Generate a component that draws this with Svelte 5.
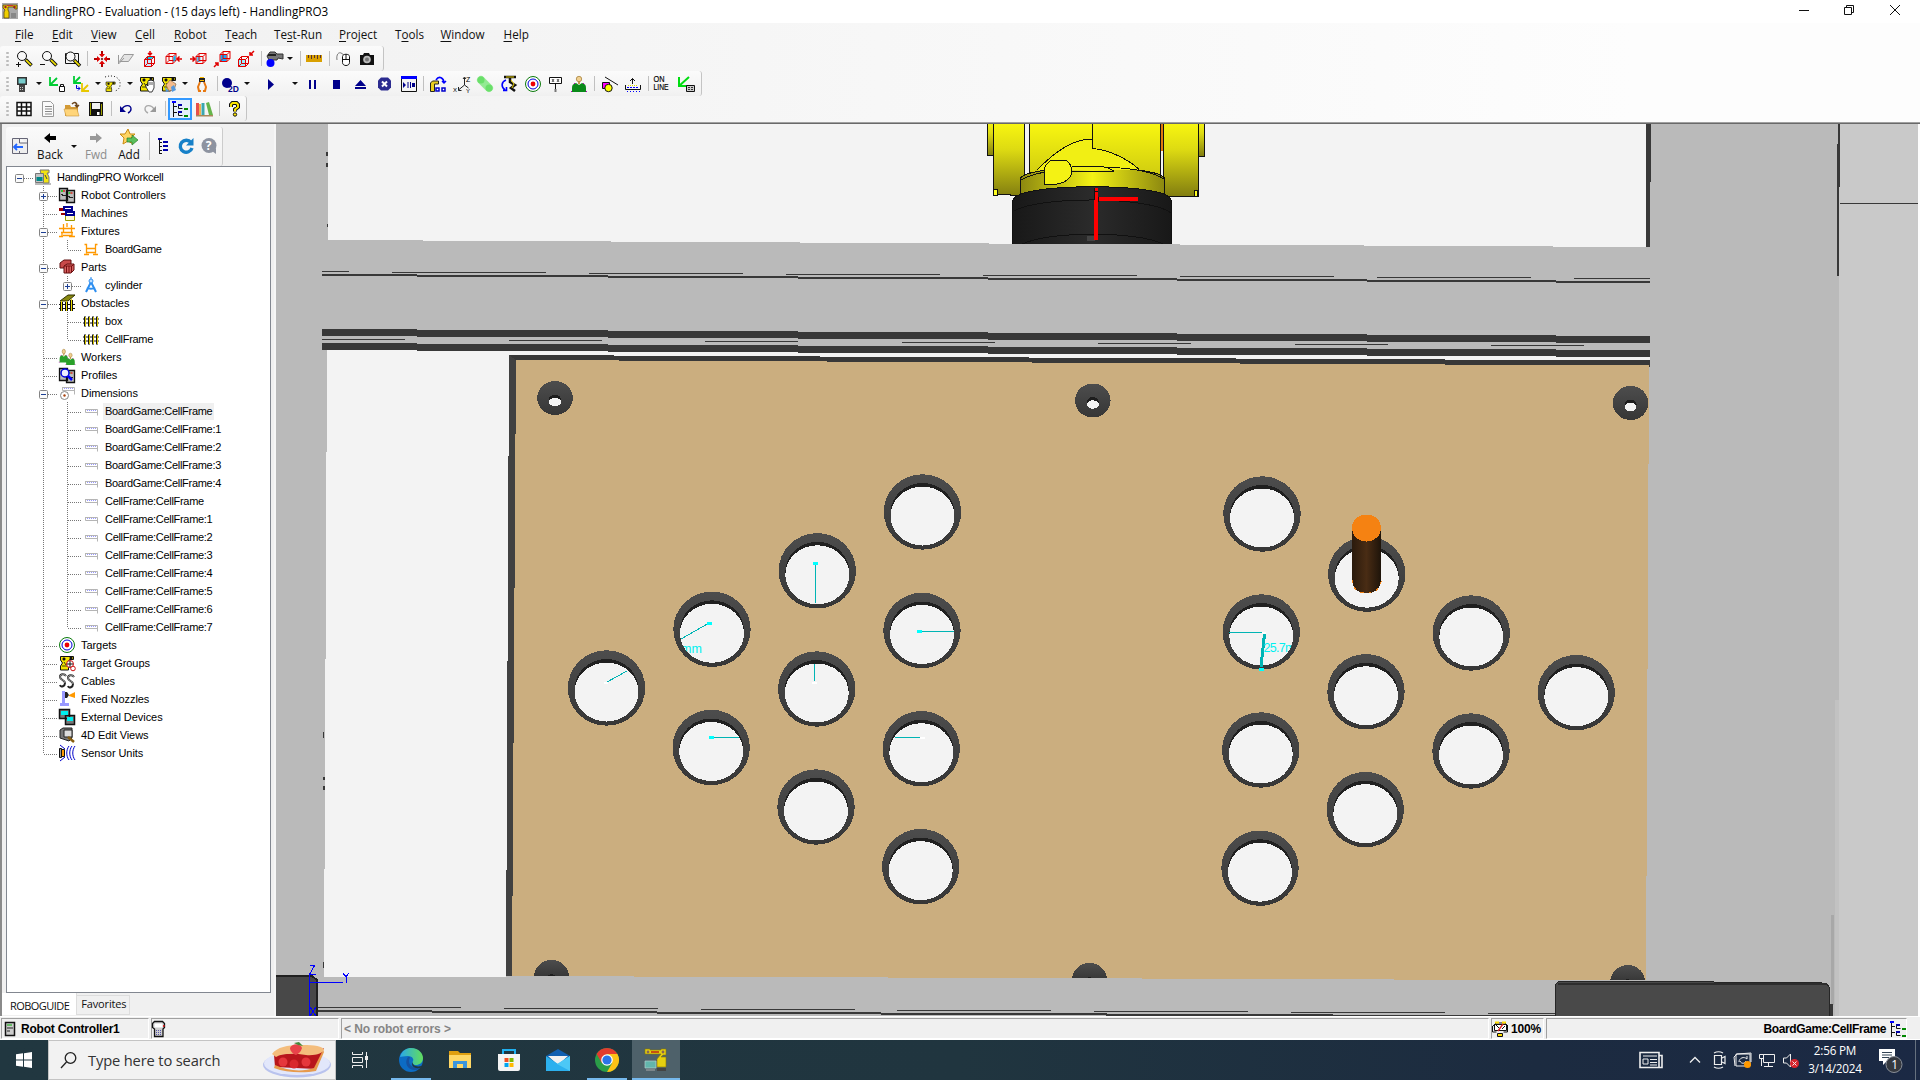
<script>
  const menus = [
    ['F', 'ile', '', 37], ['E', 'dit', '', 39], ['V', 'iew', '', 44], ['C', 'ell', '', 39], ['R', 'obot', '', 51],
    ['T', 'each', '', 49], ['s', 't-Run', 'Te', 65], ['P', 'roject', '', 56], ['o', 'ols', 'T', 45.5], ['W', 'indow', '', 63], ['H', 'elp', '', 40]
  ];

  // Toolbar entries: icon id and the width of its slot
  const bars = [
    [['zin', 24], ['zout', 24], ['zrect', 24], ['|', 6], ['fit', 24], ['plane', 24], ['cubeT', 24], ['cubeR', 24], ['cubeL', 24], ['cubeF', 24], ['cubeB', 24], ['|', 6], ['cam', 22], ['v', 8], ['|', 12], ['ruler', 16], ['|', 15], ['mouse', 15], ['photo', 31]],
    [['pendant', 20], ['v', 13], ['lock', 23], ['axes', 25], ['v', 10], ['arc', 20], ['v', 14], ['jog', 20], ['jog2', 24], ['v', 8], ['grip', 26], ['|', 4], ['twod', 22], ['v', 11], ['play', 37], ['v', 12], ['pause', 24], ['stop', 24], ['eject', 24], ['abort', 24], ['panel', 23], ['|', 6], ['rob', 24], ['xyz', 24], ['pill', 22], ['arm', 26], ['target', 22], ['sign', 24], ['person', 22], ['|', 8], ['shapes', 22], ['tray', 26], ['|', 5], ['online', 20], ['frame', 30]],
    [['grid', 24], ['doc', 24], ['open', 24], ['save', 24], ['|', 6], ['undo', 24], ['redo', 24], ['|', 6], ['tree', 24], ['books', 24], ['|', 6], ['help', 24]]
  ];

  const cube = '<path d="M2.500 6.500h7v7h-7zM5.500 3.500h7v7h-7zM2.500 6.500l3-3M9.500 6.500l3-3M2.500 13.500l3-3M9.500 13.500l3-3" fill="none" stroke="#e00000"/>';
  const lens = (x, y) => `<path d="M${x + 3.5} ${y + 3.5}l6 6" stroke="#111" stroke-width="3.600"/><path d="M${x + 4} ${y + 4}l5 5" stroke="#f5e600" stroke-width="1.700"/><circle cx="${x}" cy="${y}" r="4.500" fill="#f8f8f8" stroke="#111"/>`;
  const robot = '<path d="M1.500 1.500h13v3h-4l-2 3 1 4v3.500h-8v-4l2-3-2-3z" fill="#f4e400" stroke="#111"/><path d="M4 3h2v2H4zM11 2h2v2h-2zM3 11h5M5 7l2 3" fill="#111" stroke="#111" stroke-width=".8"/>';
  const controller = '<path d="M.5 1.500h8v12h-8zM7.500 3.500h8v12h-8z" fill="#bcbcbc" stroke="#111" stroke-width="1.300"/><path d="M2 4h2M9.500 6h2" stroke="#0c0" stroke-width="1.500"/><path d="M4 4h2M11.500 6h2" stroke="#d22" stroke-width="1.500"/><path d="M2 7.500h2M9 9.500h2M3 8.500h4M10 10.500h4" stroke="#222"/>';
  const fixture = '<path d="M1.500 3.500h2v9M14.500 3.500h-2v9M3 7.500h10M3 11.500h10M1 13.500h5M10 13.500h5" fill="none" stroke="#f90" stroke-width="1.300"/>';
  const fixtures = '<path d="M4.500 1v8M12.500 2v8M0 5.500h16M2 9.500h12M0 13.500h4M3 10v4M8 0v4M13 10v4M10 13.500h6M4 12.500h9" fill="none" stroke="#f90" stroke-width="1.300"/>';
  const fence = '<path d="M0 6h16M0 10h16" stroke="#111"/><path d="M2 3.500v10M6 3.500v10M10 3.500v10M14 3.500v10" stroke="#111" stroke-width="2"/><path d="M2.500 4v9M6.500 4v9M10.500 4v9M14.500 4v9" stroke="#f0dc00" stroke-width=".9"/>';
  const bullseye = '<circle cx="8" cy="8" r="7.500" fill="#fff" stroke="#0b7a0b"/><circle cx="8" cy="8" r="5" fill="none" stroke="#00d"/><circle cx="8" cy="8" r="2.400" fill="#e00"/>';
  const worker = (c) => `<path d="M1 16v-4c0-3 1-4 4-5l3 2 3-2c3 1 4 2 4 5v4z" fill="${c}"/><path d="M.5 15v1M15.500 15v1M3 8l1-1M13 8l-1-1" stroke="#b0b"/><path d="M7 5h2v3H7z" fill="#c79a52"/><circle cx="8" cy="3" r="2.700" fill="#f0d090" stroke="#a07830" stroke-width=".7"/>`;
  const treeIcon = '<path d="M0 0h4v2H0z" fill="#00f"/><path d="M1.500 2v14M1 5.500h4M1 11.500h4" stroke="#111" fill="none"/><path d="M6 3h4v2H6zM6 10h4v2H6z" fill="#00a"/><path d="M6.500 5v2.500h4M6.500 12v2.500h4" stroke="#111" fill="none"/><path d="M12 7h4v2h-4zM12 14h4v2h-4z" fill="#080"/>';
  const dim = '<path d="M2 6.500h12.500v6M2.500 6v3.500h12" fill="none" stroke="#b5b5b5"/><path d="M4 7.500h10" stroke="#99f" stroke-dasharray="1 1"/>';

  const icons = {
    zin: lens(6, 5) + '<path d="M0 13.500h5M2.500 11v5" stroke="#111"/>',
    zout: lens(7, 5) + '<path d="M0 13.500h5" stroke="#111"/>',
    zrect: '<path d="M1.500 2.500h13v10h-13z" fill="none" stroke="#111"/>' + lens(6.5, 5.5),
    fit: '<path d="M8 0v5M8 11v5M0 8h5M11 8h5" stroke="#b00000" stroke-width="2"/><path d="M5 3h6L8 6.500zM5 13h6L8 9.500zM3 5v6l3.500-3zM13 5v6L9.500 8z" fill="#e00000"/><circle cx="8" cy="8" r="1" fill="#500"/>',
    plane: '<path d="M6 3.500h9.500l-5 7H1.500zM.5 13V4M.5 13L6 7" fill="#e4e4e4" stroke="#999"/>',
    cubeT: '<g transform="translate(0 2)"><path d="M3 7h7v6H3z" fill="#c8e8ff"/><path d="M3 6l3-2h6l-3 2z" fill="#00c8f0"/>' + cube + '</g><path d="M8 0v4M6 2l2 2 2-2" stroke="#e00000" fill="none" stroke-width="1.500"/>',
    cubeR: '<g transform="translate(-2.500 -1)">' + cube + '<path d="M10 7l2-2v5l-2 2z" fill="#0bf"/></g><path d="M16 8h-5M13.500 5.500L11 8l2.500 2.500" stroke="#e00000" fill="none" stroke-width="1.500"/>',
    cubeL: '<g transform="translate(3.500 -1)"><path d="M3 7h4v5H3z" fill="#5cf"/>' + cube + '</g><path d="M0 8h5M2.500 5.500L5 8l-2.500 2.500" stroke="#e00000" fill="none" stroke-width="1.500"/>',
    cubeF: '<g transform="translate(3.500 -3)"><path d="M3 7h6v6H3z" fill="#1af"/>' + cube + '</g><path d="M0 16l4-4M1 12h3v3" stroke="#e00000" fill="none" stroke-width="1.500"/>',
    cubeB: '<g transform="translate(-2 2)"><path d="M3 7h6v6H3z" fill="#9ef"/>' + cube + '</g><path d="M16 0l-4 4M12 1v3h3" stroke="#e00000" fill="none" stroke-width="1.500"/>',
    cam: '<path d="M0 5l3-4h5l2 2h6v5l-5-1-1 2H2z" fill="#777" stroke="#333"/><path d="M1 4h8" stroke="#222" stroke-width="2"/><circle cx="3.500" cy="12" r="4" fill="#00f"/>',
    ruler: '<path d="M0 4h16v7H0z" fill="#d9a000"/><path d="M2.500 4v3M5.500 4v4M8.500 4v3M11.500 4v4M14.500 4v3" stroke="#533"/>',
    mouse: '<path d="M0 9C-1 3 2 1 4 2s2 1 3 3" fill="none" stroke="#777"/><path d="M5.500 5.500c0-3 7-3 7 0v6c0 4-7 4-7 0zM5.500 8.500h7M9 3.500v5" fill="#fff" stroke="#111"/>',
    photo: '<path d="M0 4h3l1-2h5l1 2h4v10H0z" fill="#111"/><circle cx="7" cy="8.500" r="3.800" fill="#bbb"/><circle cx="7" cy="8.500" r="2" fill="#777"/>',
    pendant: '<path d="M3 1h10v8H3z" fill="#333"/><path d="M4.500 2.500h7v5h-7z" fill="#7cc"/><path d="M5 9h6v7H5z" fill="#444"/><path d="M6 11.500h4M6 13.500h4" stroke="#ccc" stroke-dasharray="1 1"/>',
    lock: '<path d="M1 1v8h8M1 9l7-7" stroke="#0c3" fill="none" stroke-width="1.800"/><path d="M10.500 10.500h5v5h-5z" fill="#fff" stroke="#111"/><path d="M11.500 10V8.500h3V10" fill="none" stroke="#111"/>',
    axes: '<path d="M1 0v7h7M1 7l6-6" stroke="#0c3" fill="none" stroke-width="1.800"/><path d="M9 7v8h7M9 15l6-6" stroke="#e8c800" fill="none" stroke-width="1.800"/><path d="M3.500 9v3.500H7M5 10.500l2 2-2 2" stroke="#00d" fill="none"/>',
    arc: '<path d="M0 1c9-3 16 1 15 8 0 3-2 5-5 6" fill="none" stroke="#222" stroke-dasharray="1 2"/><g transform="translate(0 5) scale(.7)">' + robot + '</g>',
    jog: robot + '<path d="M7 8l2 2V5l1-1 1 1 1-2 1 2 1-1 1 2v6l-2 4h-3l-3-5z" fill="#fff" stroke="#111" stroke-width=".8"/><path d="M11 6v3M13 6v3" stroke="#111" stroke-width=".7"/>',
    jog2: robot + '<path d="M5 9l4-5 6 4-2 6-5 1z" fill="#f5bb8c" stroke="#864" stroke-width=".7"/><path d="M10 11l3-2 2 5-4 2zM4 11l4 4-3 1z" fill="#59d"/>',
    grip: '<path d="M5 2h6v4H5z" fill="#222"/><path d="M6 1.500h4M6 4.500h4" stroke="#fb0"/><path d="M6 6l-2 5 1 4h2M10 6l2 5-1 4H9" fill="none" stroke="#e87810" stroke-width="2"/>',
    twod: '<circle cx="5" cy="7" r="5" fill="#00008b"/><text x="6" y="16" font-size="8.500" font-weight="bold" fill="#00008b">2D</text>',
    play: '<path d="M5 3v11l6-5.500z" fill="#00008b"/>',
    pause: '<path d="M4 4h2v9H4zM9 4h2v9H9z" fill="#00008b"/>',
    stop: '<path d="M4 4h7v9H4z" fill="#00008b"/>',
    eject: '<path d="M2 10l5.500-6L13 10zM2 11h11v2H2z" fill="#00008b"/>',
    abort: '<path d="M4 1.500h7l3 3v7l-3 3H4l-3-3v-7z" fill="#2c2c90"/><path d="M5 5.500l5 5M10 5.500l-5 5" stroke="#fff" stroke-width="2"/>',
    panel: '<path d="M.5.5h15v15H.5z" fill="#f4f4f4" stroke="#111"/><path d="M0 1.500h16" stroke="#00f" stroke-width="3"/><path d="M2 6v6l3-3zM11 7h3v4h-3z" fill="#00008b"/><path d="M7 6v6M9.500 6v6" stroke="#00008b"/>',
    rob: '<path d="M.5 15.500V7l2-2h6v3H4.500v7.500z" fill="#e8cf20" stroke="#222"/><path d="M6 4c3-5 8-2 8 3M12 5l2 2 2-2" fill="none" stroke="#00f" stroke-width="1.500"/><path d="M6 12h3v3H6zM12 12h3v3h-3z" fill="#fff" stroke="#00c" stroke-width="1.500"/>',
    xyz: '<path d="M10.500 2v7l4 3M10.500 9l-6 5M9 3l1.500-2L12 3M4.500 11v3.500h3" stroke="#222" fill="none"/><text x="12" y="6" font-size="7">Z</text><text x="-1" y="16" font-size="6">X</text><text x="12" y="17" font-size="6">Y</text>',
    pill: '<path d="M4 4l8 8" stroke="#93ea93" stroke-width="8" stroke-linecap="round"/><circle cx="4" cy="4" r="3.500" fill="#6adf6a"/><circle cx="12" cy="12" r="3.500" fill="#6adf6a"/>',
    arm: '<path d="M3 1h12M9 2v4l5 3-4 3 4 3" stroke="#111" stroke-width="2.500" fill="none"/><path d="M5 1h8M10 4l3 4-2 4" stroke="#e8d000" fill="none"/><path d="M5 4C0 6 0 11 4 14M2 14.500h3.500V11" fill="none" stroke="#00f" stroke-width="1.600"/>',
    target: bullseye,
    sign: '<path d="M1.500 1.500h12v6h-12z" fill="#fff" stroke="#111"/><path d="M7.500 8v7" stroke="#111"/><path d="M7.500 13v3" stroke="#777" stroke-width="2"/><path d="M4 3l2 3M6 3L4 6M9 3l2 3M11 3l-2 3" stroke="#111" stroke-width=".7"/>',
    person: worker('#0a8a1a'),
    shapes: '<path d="M1.500 6.500h7v6h-7z" fill="#f0f" stroke="#111"/><circle cx="7.500" cy="12" r="3.700" fill="#ff0" stroke="#111"/><path d="M4 1l13 8" stroke="#111"/>',
    tray: '<path d="M.5 9v4.500h15V9M7.500 8V2.500M5 5l2.500-2.500L10 5" fill="none" stroke="#111"/><path d="M2 11.500h12" stroke="#00f" stroke-dasharray="2 1"/><path d="M3 9.500h10" stroke="#dd0" stroke-dasharray="1 1"/><path d="M2 15.500h13" stroke="#00f" stroke-dasharray="1 2"/>',
    online: '<text x=".5" y="6" font-size="9" stroke="#111" stroke-width=".2" textLength="11" lengthAdjust="spacingAndGlyphs">ON</text><text x=".5" y="14" font-size="9" stroke="#111" stroke-width=".2" textLength="15" lengthAdjust="spacingAndGlyphs">LINE</text>',
    frame: '<path d="M1 1v9h9M1 10l10-9" stroke="#0d1" fill="none" stroke-width="2"/><path d="M8.500 9.500h8v6h-8z" fill="#ccc" stroke="#111"/><path d="M10 11.500h5M10 13.500h5" stroke="#333" stroke-dasharray="2 1"/>',
    grid: '<path d="M1 1.500h14v13H1zM1 6h14M1 10h14M5.500 1v13M10.500 1v13" fill="#fff" stroke="#111" stroke-width="1.500"/>',
    doc: '<path d="M2.500.5h8l3 3v12h-11z" fill="#fafafa" stroke="#999"/><path d="M5 5.500h7M5 8h7M5 10.500h7M5 13h7" stroke="#888"/>',
    open: '<path d="M1 4h5l1 2h7v9H1z" fill="#d39a35"/><path d="M0 8h13l2 7H2z" fill="#ffd57a" stroke="#c8963c" stroke-width=".6"/><path d="M8 3c3-3 5-1 5 2M11 4l2 2 2-2" stroke="#6b451d" fill="none" stroke-width="1.500"/>',
    save: '<path d="M1 1h14v14H1z" fill="#111"/><path d="M2 2h1v12H2zM13 3h1v11h-1z" fill="#a0a000"/><path d="M4 2h8v6H4z" fill="#f2f2f2"/><path d="M9 11h2.500v3H9z" fill="#fff"/>',
    undo: '<path d="M4 8c3-5 9-4 9 0 0 2-1 3-3 4" fill="none" stroke="#00008b" stroke-width="1.400"/><path d="M2 5v6h6z" fill="#00008b"/>',
    redo: '<path d="M12 8C9 3 3 4 3 8c0 2 1 3 3 4" fill="none" stroke="#aaa" stroke-width="1.400"/><path d="M14 5v6H8z" fill="#999"/>',
    tree: treeIcon,
    books: '<path d="M0 2h3v12H0z" fill="#e8504a"/><path d="M3 3h2v11H3z" fill="#f0b050"/><path d="M5.500 2h3v12h-3z" fill="#3aa8b0"/><path d="M10 2l3-1 4 13h-4z" fill="#65b54a"/><path d="M0 14h17v1.500H0z" fill="#a8875a"/>',
    help: '<path d="M5 6V3.500L6.500 2h4L12 3.500V6L9 8.500v2" fill="none" stroke="#111" stroke-width="4"/><path d="M5 6V3.500L6.500 2h4L12 3.500V6L9 8.500v2" fill="none" stroke="#ffe800" stroke-width="1.900"/><circle cx="9" cy="13.500" r="1.700" fill="#ffe800" stroke="#111"/>',
    cell: '<path d="M5 1h9v3h-2l2 4v6H8V8L6 5z" fill="#f2e410" stroke="#777"/><path d="M10 6l2 4" stroke="#444"/><path d="M.5 4.500h8v9h-8z" fill="#c4c4c4" stroke="#777"/><path d="M1.500 8h6v4h-6z" fill="#088"/><path d="M0 15h16" stroke="#777"/>',
    controllers: controller,
    machines: '<path d="M6.500 6.500h9v9h-9z" fill="#fffad0" stroke="#990"/><path d="M5 2h8v3H5zM7 7h8v3H7z" fill="#fff" stroke="#000090" stroke-width="2"/><path d="M0 3h4v3H0zM2 8h4v2H2z" fill="#900"/>',
    fixtures,
    fixture,
    parts: '<path d="M1 4l4-3h7v5l-3 3H1z" fill="#c84a4a" stroke="#601010"/><path d="M5 7l3-2h7v6l-3 3H5z" fill="#d86060" stroke="#601010"/><path d="M5 7h8l2-2M7.500 7v7M10 7v7M12.500 7v7" fill="none" stroke="#711"/>',
    cyl: '<path d="M8 5L3 15M8 5l5 10M4 10.500c2 1.500 6 1.500 8 0" fill="none" stroke="#2d8ef0" stroke-width="2"/><circle cx="8" cy="4" r="2" fill="#bdf" stroke="#2d8ef0"/><path d="M8 0v2" stroke="#2d8ef0"/>',
    obstacles: '<path d="M1 6l8-6h7L9 6z" fill="#888810" stroke="#330"/><path d="M0 9.500h16M0 13.500h16M1.500 7v9M3.500 7v9M6.500 7v9M8.500 7v9M11.500 5v11M13.500 5v11" stroke="#111"/><path d="M2.500 6v10M7.500 6v10M12.500 4v12" stroke="#f0dc00"/>',
    fence,
    workers: '<g transform="translate(0 0) scale(.6 .85)">' + worker('#2aa02a') + '</g><g transform="translate(6.500 4) scale(.62 .75)">' + worker('#2aa02a') + '</g>',
    profiles: controller + '<circle cx="6" cy="6" r="4" fill="#eef" stroke="#00d" stroke-width="1.500"/><path d="M9 9l4 4" stroke="#00f" stroke-width="2.500"/>',
    dims: '<path d="M3 2.500h12.500v7M3.500 2v3.500h12" fill="none" stroke="#b5b5b5"/><path d="M5 3.500h10" stroke="#99f" stroke-dasharray="1 1"/><circle cx="5.500" cy="10.500" r="4" fill="#fff" stroke="#888"/><circle cx="5.500" cy="10.500" r="1.200" fill="#a41"/>',
    dim,
    tgroups: robot + '<circle cx="11" cy="9" r="3.500" fill="#fff" stroke="#c11"/><path d="M11 6v6M8 9h6" stroke="#111"/><circle cx="14" cy="13.500" r="2.300" fill="#fff" stroke="#c11"/>',
    cables: '<path d="M7 3C5 0 1 1 1 4s5 3 5 6-4 5-5 2M15 4c-2-3-6-2-6 1s5 3 5 6-4 5-5 2" fill="none" stroke="#222" stroke-width="2"/><path d="M7 3C5 0 1 1 1 4s5 3 5 6M15 4c-2-3-6-2-6 1s5 3 5 6" fill="none" stroke="#ccc" stroke-width=".7"/>',
    nozzles: '<path d="M3 0h3v12h4v3H1v-3h2z" fill="#99f"/><path d="M6 1h2l2 3-2 3H6z" fill="#222"/><path d="M10 4l6-3v6l-6-2z" fill="#f90"/>',
    external: '<path d="M.5.5h10v9H.5zM6.500 6.500h9v9h-9z" fill="#777" stroke="#111" stroke-width="1.500"/><path d="M2 2h7v4H2zM8 8h6v4H8z" fill="#0ee"/>',
    views: '<path d="M1 3l3-2h9v10l-3 3-9-3z" fill="#777" stroke="#222"/><path d="M5 3h8v7H5z" fill="#ddd" stroke="#222"/><path d="M9 10l6 5" stroke="#875d10" stroke-width="2.500"/>',
    sensor: '<path d="M.5 3.500h2v9h-2z" fill="#999" stroke="#111"/><path d="M2.500 4.500h3v7h-3z" fill="#f90" stroke="#111"/><path d="M10 1c-3 4-3 10 0 14M13 1c-3 4-3 10 0 14M16 1c-3 4-3 10 0 14M1 0l5 4M1 16l5-4" fill="none" stroke="#00c"/>'
  };

  // Tree rows: level, expander (+, - or none), icon, label, last child of its branch
  const tree = [
    [0, '-', 'cell', 'HandlingPRO Workcell', true],
    [1, '+', 'controllers', 'Robot Controllers'], [1, '', 'machines', 'Machines'],
    [1, '-', 'fixtures', 'Fixtures'], [2, '', 'fixture', 'BoardGame', true],
    [1, '-', 'parts', 'Parts'], [2, '+', 'cyl', 'cylinder', true],
    [1, '-', 'obstacles', 'Obstacles'], [2, '', 'fence', 'box'], [2, '', 'fence', 'CellFrame', true],
    [1, '', 'workers', 'Workers'], [1, '', 'profiles', 'Profiles'], [1, '-', 'dims', 'Dimensions'],
    ...['BoardGame:CellFrame', 'BoardGame:CellFrame:1', 'BoardGame:CellFrame:2', 'BoardGame:CellFrame:3', 'BoardGame:CellFrame:4', 'CellFrame:CellFrame', 'CellFrame:CellFrame:1', 'CellFrame:CellFrame:2', 'CellFrame:CellFrame:3', 'CellFrame:CellFrame:4', 'CellFrame:CellFrame:5', 'CellFrame:CellFrame:6', 'CellFrame:CellFrame:7'].map((t, i) => [2, '', 'dim', t, i === 12]),
    [1, '', 'target', 'Targets'], [1, '', 'tgroups', 'Target Groups'], [1, '', 'cables', 'Cables'], [1, '', 'nozzles', 'Fixed Nozzles'],
    [1, '', 'external', 'External Devices'], [1, '', 'views', '4D Edit Views'], [1, '', 'sensor', 'Sensor Units', true]
  ];

  const holes = [
    [922.5, 512], [817.3, 570.8], [922, 630.5], [712, 629.3], [816.7, 689], [606.5, 688], [711.2, 747.5], [921.3, 748.7], [816, 807], [920.7, 866.6],
    [1262, 514], [1366.7, 574.2], [1261.3, 632], [1471.3, 633], [1366, 691.7], [1576.3, 692.6], [1260.7, 750], [1471, 751], [1365.3, 809.6], [1260, 868.2]
  ];
  const screws = [[555, 398], [1092.8, 400.5], [1630.6, 403]];
  const cutScrews = [[551.5, 977], [1089.5, 980], [1627.7, 982]];

  // Groove marks along the frame beams: [start, y, length, period, first x, last x]
  const grooves = [[195, 271, 154, 197, 322, 1650], [312, 339, 93, 196.5, 322, 1650], [307, 1007, 154, 196.8, 318, 1555]];
  const marks = grooves.flatMap(([start, y, len, step, lo, hi]) =>
    Array.from({ length: 8 }, (_, i) => {
      const a = Math.max(lo, Math.round(start + i * step));
      const b = Math.min(hi, Math.round(start + i * step + len));
      return [a, y + i, b - a];
    }).filter((m) => m[2] > 0)
  );
</script>

{#snippet icon(id)}
  <svg class="ic" viewBox="0 0 16 16">{@html icons[id]}</svg>
{/snippet}

<div class="win">
  <header class="title">
    <svg class="logo" viewBox="0 0 16 16"><rect width="16" height="16" fill="#a9a9a9" /><path d="M1 2h14v4h-2l-1-2H6v3l1 2v6H2V9l1-2-2-2z" fill="#f0d000" stroke="#5a4a10" stroke-width=".8" /><circle cx="3.500" cy="4" r="1.200" fill="#922" /><circle cx="12.500" cy="4" r="1.300" fill="#922" /><path d="M5 2.500h6" stroke="#c33" /><path d="M9 10h5v5H9z" fill="#888" /></svg>
    <span class="caption">HandlingPRO - Evaluation - (15 days left) - HandlingPRO3</span>
    <svg class="controls" viewBox="0 0 104 12"><path d="M1 6.500h10M46.500 3.500h7v7h-7zM48.500 3v-1.500h7v7H54M92 1l10 10M102 1L92 11" fill="none" stroke="#111" /></svg>
  </header>
  <nav class="menu">
    {#each menus as [k, rest, pre, w]}
      <span style:width="{w}px">{pre}<u>{k}</u>{rest}</span>
    {/each}
  </nav>
  <div class="bars">
    {#each bars as bar}
      <div class="bar">
        <i class="handle"></i>
        {#each bar as [id, w]}
          <span class="slot" class:on={id === 'tree'} style:width="{w}px">
            {#if id === '|'}<i class="sep"></i>{:else if id === 'v'}<i class="drop"></i>{:else}{@render icon(id)}{/if}
          </span>
        {/each}
      </div>
    {/each}
  </div>

  <main>
    <aside>
      <div class="sidebar">
        <svg class="big side" viewBox="0 0 16 16"><path d="M.5.5h15v15H.5zM7.500 0v5h8M7.500 16v-3" fill="#eee" stroke="#667" /><path d="M2 9h9M5 6L2 9l3 3" fill="none" stroke="#26f" stroke-width="1.800" /></svg>
        <span class="btn back"><svg viewBox="0 0 12 10"><path d="M0 5l6-5v3h6v4H6v3z" fill="#000" /></svg>Back</span>
        <i class="drop"></i>
        <span class="btn fwd"><svg viewBox="0 0 12 10"><path d="M12 5L6 0v3H0v4h6v3z" fill="#999" /></svg>Fwd</span>
        <span class="btn add"><svg viewBox="0 0 18 16"><path d="M8 0l2 5h5l-4 4 2 6-5-3-5 3 1-6-4-4h5z" fill="#ffd564" stroke="#c98a10" /><path d="M7 9h5V6l6 5-6 5v-3H7z" fill="#5cc05c" stroke="#2a802a" stroke-width=".7" /></svg>Add</span>
        <i class="sep tall"></i>
        <svg class="ic outline" viewBox="0 0 16 16"><path d="M2 0h4v2H2zM7 3h5v2H7zM7 7h5v2H7zM7 11h5v2H7z" fill="#00a" /><path d="M3.500 2v14M3 4.500h3M3 8.500h3M3 12.500h3M3 15.500h3" stroke="#111" fill="none" /></svg>
        <svg class="big" viewBox="0 0 16 16"><path d="M13 4.500A6 6 0 1 0 14 10" fill="none" stroke="#1680c8" stroke-width="3.400" /><path d="M15.500 0v7.500H8z" fill="#1680c8" /></svg>
        <svg class="big q" viewBox="0 0 16 16"><circle cx="8" cy="7.500" r="7.500" fill="#8d93a0" /><path d="M11 13l4 3v-6z" fill="#8d93a0" /><text x="4.700" y="12" font-size="12" font-weight="bold" fill="#fff">?</text></svg>
      </div>
      <div class="tree">
        {#each tree as [level, exp, id, label, last], i}
          <div class="row">
            {#each Array(level) as _, k}
              <svg class="cell" viewBox="0 0 24 18">{#if k > 0}<path class="dots" d="M12.500 0v18" />{/if}</svg>
            {/each}
            <svg class="cell" viewBox="0 0 24 18">
              {#if level > 0}<path class="dots" d={last ? 'M12.500 0v10' : 'M12.500 0v18'} />{/if}
              <path class="dots" d="M13 10.500h13" />
              {#if exp}
                <rect x="8.500" y="6.500" width="8" height="8" rx="1" fill="#fafafa" stroke="#848484" />
                <path d="M10 10.500h5" stroke="#1c3f94" />
                {#if exp === '+'}<path d="M12.500 8v5" stroke="#1c3f94" />{/if}
              {/if}
            </svg>
            <span class="cell pic">{@render icon(id)}</span>
            <span class="label" class:tight={/Frame|PRO|Game/.test(label)} class:sel={i === 13}>{label}</span>
          </div>
        {/each}
      </div>
      <div class="tabs"><span class="tab active">ROBOGUIDE</span><span class="tab">Favorites</span></div>
    </aside>

    <svg class="view" viewBox="276 124 1642 892" shape-rendering="crispEdges">
      <defs>
        <linearGradient id="y" x1="0" y1="0" x2="0" y2="1"><stop offset="0" stop-color="#fdfb10" /><stop offset=".4" stop-color="#dedb12" /><stop offset="1" stop-color="#827e10" /></linearGradient>
        <linearGradient id="yc" x1="0" y1="0" x2="0" y2="1"><stop offset="0" stop-color="#fdfb10" /><stop offset="1" stop-color="#c6c210" /></linearGradient>
        <linearGradient id="yr"><stop offset="0" stop-color="#8c8810" /><stop offset=".5" stop-color="#f4f214" /><stop offset="1" stop-color="#8c8810" /></linearGradient>
        <linearGradient id="k"><stop offset="0" stop-color="#181818" /><stop offset=".5" stop-color="#2b2b2b" /><stop offset="1" stop-color="#181818" /></linearGradient>
        <linearGradient id="ring" x1="0" y1="0" x2="0" y2="1"><stop offset="0" stop-color="#4d4d4d" /><stop offset="1" stop-color="#363636" /></linearGradient>
        <linearGradient id="peg"><stop offset="0" stop-color="#2a1a0c" /><stop offset=".5" stop-color="#492c14" /><stop offset="1" stop-color="#1e140a" /></linearGradient>
        <clipPath id="c1"><ellipse cx="712" cy="633.300" rx="32" ry="29.500" /></clipPath>
        <clipPath id="c2"><ellipse cx="1261.300" cy="636" rx="32" ry="29.500" /></clipPath>
      </defs>
      <rect x="276" y="124" width="1642" height="892" fill="#bababa" />
      <path d="M328 124H1646V247L328 240z" fill="#f3f3f3" />
      <path d="M1646 124h5v58h-1v65h-4z" fill="#383838" />
      <path d="M327 350L1650 357v5L512 977H324z" fill="#f3f3f3" />
      <path d="M326 152h2v4h-2zM326 163h2v4h-2zM327 224h1v3h-1zM323 732h1v6h-1zM323 777h2v3h-2zM323 786h2v4h-2zM323 962h1v6h-1z" fill="#383838" />

      <path d="M322 274L1650 281v2L322 276z M322 329L1650 336v7L322 336z M322 343L1650 350v7L322 350z" fill="#383838" />
      <path d="M509 355L1650 360.500v7L516 364 512 977h-6z" fill="#383838" />
      <path d="M509 355l7 5-4 617h-6z" fill="#414141" />
      <path d="M516 360L1649 365.500 1646 981 512 976z" fill="#cbae7f" />

      {#each screws as [x, y]}
        <ellipse cx={x} cy={y} rx="17.800" ry="17" fill="url(#ring)" /><ellipse cx={x} cy={y + 1.5} rx="6" ry="5" fill="#1d1d1d" /><ellipse cx={x} cy={y + 4} rx="6" ry="4.200" fill="#f3f3f3" />
      {/each}
      {#each cutScrews as [x, y]}
        <path d="M{x - 17.5} {y}a17.500 17 0 0 1 35 0z" fill="url(#ring)" /><path d="M{x - 5} {y}q5 -6 10 0z" fill="#1d1d1d" />
      {/each}
      {#each holes as [x, y]}
        <ellipse cx={x} cy={y} rx="38.700" ry="37.700" fill="url(#ring)" />
        <ellipse cx={x} cy={y + 1} rx="32" ry="30" fill="#202020" />
        <path d="M{x - 32.5} {y + 2}v8l10 15h44l11-15v-8z" fill="#404040" />
        <ellipse cx={x} cy={y + 4} rx="32" ry="29.500" fill="#f3f3f3" />
      {/each}

      <g fill="none" stroke="#00b4b4">
        <path d="M815.500 564v39M920 631.500h34M709 623L681 639M607 682l20-11M814.500 664v17M711 737.500h28M895 737.500h25M1229 632.500h33" />
        <path d="M1264.500 634L1261 667" stroke-width="3" />
        <path d="M813 563.500h5M917 631.500h5M707 623.500h5M709 737.500h5M1259 669.500h5" stroke="#0ff" stroke-width="3" />
      </g>
      <path d="M604 682.500h4M812 682.500h5M920 737.500h5M1262 632.500h4" stroke="#fff" stroke-width="2" />
      <g class="dimtext"><text x="681" y="652.500" clip-path="url(#c1)">mm</text><text x="1263.500" y="651.500" textLength="32" clip-path="url(#c2)">25.7m</text></g>
      <path d="M1352 528v54c2 15 27 15 29 0v-54z" fill="url(#peg)" />
      <path d="M1352 580v2c2 15 27 15 29 0v-2" fill="none" stroke="#f58212" stroke-dasharray="3 5" />
      <ellipse cx="1366.500" cy="528" rx="14.500" ry="13.500" fill="#f58212" />

      <g stroke="#111">
        <path d="M987.500 118h6v37.500h-6zM1198.500 118h6v38h-6z" fill="url(#y)" />
        <path d="M993.500 118h31v77h-14l-17-1zM1163.500 118h35v78h-35z" fill="url(#y)" />
        <path d="M1024.500 118h5v60h-5z" fill="#f3f3f3" />
        <path d="M1029.500 118h131v70h-131z" fill="url(#yc)" />
        <path d="M1161 118h2v33h-2z" fill="#e07810" stroke="none" /><path d="M1161 151h2v29h-2z" fill="#f3f3f3" stroke="none" />
        <path d="M1020.500 178c10-14 134-14 144 0v20h-144z" fill="url(#yr)" />
        <path d="M1037 170c18-18 35-31 55-31v9.500c20 1 40 14 47 21" fill="#f1ef14" />
        <path d="M1092.500 118v30" fill="none" />
        <path d="M1072 167c35-1 75 1 92 12M1072 171h42M1106 167l8 4M1021 180c6-4 14-6 24-8" fill="none" />
        <path d="M1044.500 168c1-3 5-8 9-8h11c4 1 6 5 7 8v5c-1 7-9 11-19 11.500h-8z" fill="#f4f214" />
        <path d="M993.500 189.500h4v6h-4zM1194.500 190.500h3v6h-3z" fill="#ff2" />
        <path d="M1160 148v30M1198 163v26" fill="none" />
        <path d="M1012.500 202c0-5 6-7 10-8.500 30-9 110-9 140 0 5 2 9 4 9 9v42h-159z" fill="url(#k)" />
        <path d="M1014 211c25-15 135-15 157 2M1022 244c30-13 115-13 141 0" fill="none" />
      </g>
      <path d="M1087 236h8v5h-8z" fill="#444" />
      <path d="M1094 188h4v52h-4zM1094 197h44v4h-44z" fill="#f00" /><path d="M1094.500 188v12M1094 191.500h4M1098.500 197v5" stroke="#111" />
      <path d="M1005 244h175v10h-175z" fill="#bababa" />

      <path d="M506 976L1646 980.500V985H506z" fill="#bababa" />
      <path d="M318 1010L1555 1015.500v2L318 1012z" fill="#383838" />
      {#each marks as [x, y, w]}<rect {x} {y} width={w} height="1" fill="#383838" />{/each}
      <rect x="1839" y="124" width="79" height="892" fill="#c9c9c9" />
      <path d="M1835 700h4v316h-4z" fill="#c2c2c2" />
      <path d="M1831 915h3v90h-3z" fill="#a8a8a8" />
      <path d="M1838 124h2v63h-2zM1837 144h2v132h-2zM1840 203h78v1h-78zM1829 1004h4v12h-4z" fill="#383838" />
      <path d="M1555 1016v-31l4-4h46l217 2 5 1 2 3v29z" fill="#494949" stroke="#262626" /><path d="M1558 984h269" stroke="#2d2d2d" stroke-width="2" />
      <path d="M276 976h36l5 4v36h-41z" fill="#484848" /><path d="M276 976h36l5 4v36" fill="none" stroke="#202020" stroke-width="2" />
      <g fill="none" stroke="#00f"><path d="M309.500 975v41M309 982.500h34" /><path d="M309.500 965.500h5l-5 9h6M343 973l3 4 3-4M346.500 977v6M310 1007l6 9M316 1007l-6 9" /></g>
    </svg>
  </main>

  <div class="status">
    <span class="pane p1"><svg class="ic" viewBox="0 0 16 16"><path d="M3.500 1.500h9v13h-9z" fill="#ccc" stroke="#111" stroke-width="1.500" /><path d="M5 4h5" stroke="#0a0" /><path d="M5 7h6M5 10h3" stroke="#222" /></svg><b>Robot Controller1</b></span>
    <span class="pane p2"><svg class="ic" viewBox="0 0 16 16"><path d="M.5 2.500l2-2h8l2 2v4l-1.500 1.500v7.500H2.500V8L.5 6.500z" fill="#ccc" stroke="#111" stroke-width="1.300" /><path d="M2.500 2.500h8v4h-8z" fill="#fff" /><path d="M4 9.500h6M4 11.500h6M4 13.500h6" stroke="#55a" stroke-dasharray="1 1" /><path d="M11 4h1.500v2H11z" fill="#d22" /></svg></span>
    <span class="pane p3">&lt; No robot errors &gt;</span>
    <span class="pane p4"><svg class="ic" viewBox="0 0 16 16"><path d="M2.500 3.500h12v6h-12zM5.500 12.500h5v3h-5zM1 5l3-3h9l3 3" fill="#fff" stroke="#111" /><path d="M3 1.500h4M10 1.500h4M6 14h4" stroke="#fd0" stroke-width="2" /><path d="M6 10l5-7" stroke="#d22" stroke-width="1.300" /><path d="M.5 5v6h4M15.500 5v6h-4M4 4l3 3M13 5l-3 3" fill="none" stroke="#111" /></svg><b>100%</b></span>
    <span class="pane p5"><b>BoardGame:CellFrame</b>{@render icon('tree')}</span>
    <span class="corner"></span>
  </div>

  <footer>
    <span class="start"><svg viewBox="0 0 16 16"><path d="M0 2.300l7-1v6.300H0zM8 1.200l8-1.200v7.600H8zM0 8.500h7v6.300l-7-1zM8 8.500h8V16l-8-1.200z" fill="#fff" /></svg></span>
    <div class="search">
      <svg class="glass" viewBox="0 0 17 17"><circle cx="10.500" cy="6" r="5.300" fill="none" stroke="#222" stroke-width="1.300" /><path d="M6.500 10L1 16" stroke="#222" stroke-width="1.300" /></svg>
      <span>Type here to search</span>
      <svg class="pie" viewBox="0 0 68 36"><ellipse cx="34" cy="23" rx="34" ry="12.500" fill="#b9c3ee" /><ellipse cx="34" cy="21.500" rx="33" ry="11.500" fill="#e2e7fb" /><path d="M11 13l44-4 6-3-8 21-41-2z" fill="#b8161c" /><path d="M12 23c12 6 28 7 39 3l9-18 1 2-8 19-7 1c-12 1-25 0-35-4z" fill="#e79a4c" /><path d="M9 12C14 5 25 3 36 3s21 0 25 4c0 4-9 7-18 6-12-2-24-2-30 2z" fill="#f4bd7c" /><circle cx="20" cy="20" r="4.500" fill="#e5373c" /><circle cx="31" cy="22" r="4.500" fill="#d9272e" /><circle cx="43" cy="20" r="4.500" fill="#e5373c" /><path d="M27 6c2-5 10-5 12 0-1 4-4 6-6 7-3-1-6-4-6-7z" fill="#e8434a" /><path d="M31 1l5-1 4 4-5-1z" fill="#46883a" /></svg>
    </div>
    <span class="app tview"><svg class="tv" viewBox="0 0 16 16"><path d="M.5 0v2.500h10V0M.5 16v-2.500h10V16M.5 5.500h10v5H.5zM14.500 0v16" fill="none" stroke="#eee" /><rect x="13" y="4" width="3" height="4" fill="#eee" /></svg></span>
    <span class="app edge"><svg class="i24" viewBox="0 0 24 24"><defs><linearGradient id="e1"><stop offset="0" stop-color="#2aa8e8" /><stop offset="1" stop-color="#62de5c" /></linearGradient></defs><circle cx="12" cy="12" r="12" fill="#0c6cc4" /><path d="M1 9C3 2 8 0 12 0c8 0 12 6 12 10 0 5-4 7-7 7-3 0-4-2-3-4 1-1 0-5-5-5-4 0-7 1-8 1z" fill="url(#e1)" /><path d="M9 9c-4 5-1 13 7 13 3 0 5-2 6-4-5 3-12 1-12-5 0-2 1-3 1-4z" fill="#1552a0" /><path d="M13.500 14c0 4 5 5.500 10 3.500l-1 2c-6 2-11-1-9-5.500z" fill="#213740" /></svg></span>
    <span class="app"><svg class="i22" viewBox="0 0 22 20"><path d="M0 1h9l2 2h11v3H0z" fill="#e0a010" /><path d="M0 5h22v13H0z" fill="#ffd866" /><path d="M4 18v-7h14v7h-4v-4H8v4z" fill="#3c96dc" /></svg></span>
    <span class="app"><svg class="i24" viewBox="0 0 24 24"><path d="M6 6V2h12v4" fill="none" stroke="#20b0f0" stroke-width="2" /><path d="M1 6h22v15q0 2-2 2H3q-2 0-2-2z" fill="#f4f4f4" /><path d="M7.500 10h4v4h-4z" fill="#f25022" /><path d="M12.500 10h4v4h-4z" fill="#7fba00" /><path d="M7.500 15h4v4h-4z" fill="#00a4ef" /><path d="M12.500 15h4v4h-4z" fill="#ffb900" /></svg></span>
    <span class="app mail"><svg class="i24" viewBox="0 0 24 24"><path d="M0 8l12-7 12 7-12 9z" fill="#0f5eb0" /><path d="M2 8h20l-10 9z" fill="#f0f0f0" /><path d="M0 8l12 8 12-8v15H0z" fill="#2cb0ee" /><path d="M24 8L11 16l13 7z" fill="#4cc8f6" /></svg></span>
    <span class="app chrome"><svg class="i24" viewBox="0 0 24 24"><circle cx="12" cy="12" r="12" fill="#2a9d48" /><path d="M12 6h10.400A12 12 0 0 0 1.600 6l5.200 9z" fill="#e33b2e" /><path d="M22.400 6H12l5.200 9L12 24a12 12 0 0 0 10.400-18z" fill="#fbc116" /><circle cx="12" cy="12" r="5.800" fill="#fff" /><circle cx="12" cy="12" r="4.600" fill="#2b74e8" /></svg></span>
    <span class="app running"><svg class="i22" viewBox="0 0 22 22"><path d="M0 0h5v1h11V0h5v6h-3l-2 2h5v10h-9v-8l4-5H0z" fill="#e5cf10" stroke="#867508" stroke-width=".6" /><path d="M6 2h8v2H6z" fill="#c85010" /><circle cx="3" cy="3" r="1.400" fill="#865" /><circle cx="18" cy="3" r="1.400" fill="#865" /><path d="M0 12h11v7H0z" fill="#62b5ac" stroke="#b5cfcc" stroke-width=".7" /><path d="M1 21h9" stroke="#aaa" /><path d="M12 19h9v3h-9z" fill="#444" /></svg></span>
    <span class="grow"></span>
    <svg class="trayicons" viewBox="1636 1040 168 40" fill="none" stroke="#eee">
      <path d="M1640 1052.500h19v15h-19zM1659 1055.500h3v12h-4" stroke-width="1.600" /><path d="M1643 1059h5v5h-5zM1650 1059.500h7M1650 1062.500h7M1650 1065h7M1643 1056h14" />
      <path d="M1690 1062.500l5-5 5 5" stroke-width="1.300" />
      <path d="M1714.500 1055.500h7v9h-7zM1722 1058l3-1.500v7l-3-1.500M1714 1053q4.500-2.500 9 0M1714 1067q4.500 2.500 9 0" stroke-width="1.200" />
      <path d="M1736 1054h14v12h-14zM1735 1066l-1-9 3-3 14-1v9M1739 1062c0-4 5-6 8-3v-3M1746 1061c-1 3-5 3-6 0" /><circle cx="1747.500" cy="1064.500" r="3.500" fill="#f90" stroke="none" />
      <path d="M1763.500 1054.500h11v8h-11zM1768.500 1063v4M1764 1066.500h9M1759.500 1054.500h4v4h-4zM1761.500 1059v7" />
      <path d="M1783.500 1058h3l4-4v13l-4-4h-3z" /><circle cx="1794.500" cy="1063.500" r="4.500" fill="#d8232c" stroke="none" /><path d="M1792.500 1061.500l4 4M1796.500 1061.500l-4 4" />
    </svg>
    <div class="clock"><span>2:56 PM</span><span>3/14/2024</span></div>
    <svg class="notif" viewBox="0 0 26 26"><path d="M1 1h16v12H9l-4 4v-4H1z" fill="#fff" /><path d="M4 4.500h10M4 7h10M4 9.500h7" stroke="#345" /><circle cx="16" cy="16.500" r="8" fill="#34383f" stroke="#8a8f98" /><text x="13.300" y="21" font-size="12" fill="#fff">1</text></svg>
    <i class="edgebar"></i>
  </footer>
</div>

<style>
  :global(body) { margin: 0; overflow: hidden; }
  .win { width: 1920px; height: 1080px; display: flex; flex-direction: column; font-family: 'Open Sans', sans-serif; font-size: 11.700px; color: #111; background: linear-gradient(90deg, #f0f0f0, #fdfdfd 85%); }
  svg { display: block; flex: none; overflow: visible; }
  .ic { width: 16px; height: 16px; font-family: 'Liberation Sans', sans-serif; }
  .title { height: 23px; background: #fff; display: flex; align-items: center; padding: 0 18px 1px 2px; box-sizing: border-box; }
  .logo { width: 16px; height: 16px; }
  .caption { margin-left: 5px; flex: 1; white-space: nowrap; color: #000; letter-spacing: -.02px; margin-top: -1px; }
  .controls { width: 104px; height: 12px; margin-top: -2px; }
  .menu { height: 23px; display: flex; align-items: center; padding: 0 0 2px 15px; box-sizing: border-box; }
  .menu span { flex: none; white-space: nowrap; }
  u { text-underline-offset: 2px; }
  .bars { height: 76px; display: flex; flex-direction: column; align-items: flex-start; }
  .bar { height: 25px; display: flex; align-items: center; padding-left: 3px; background: linear-gradient(#fbfbfb, #f3f3f3 80%, #f0f0f0); border-right: 1px solid #c4c4c4; border-radius: 3px; }
  .handle { width: 9px; height: 15px; background: radial-gradient(circle at 4.500px 2px, #bbb 1px, transparent 1.500px) 0 0 / 9px 4px; }
  .slot { height: 25px; display: flex; flex: none; align-items: center; justify-content: center; box-sizing: border-box; }
  .slot .ic { margin-top: 1px; }
  .slot.on { height: 22px; border: 2px solid #3399ff; background: #e4f0fb; margin-top: 1px; }
  .on .ic { margin-top: 0; }
  .sep { width: 1px; height: 15px; flex: none; background: #c0c0c0; }
  .drop { border: 3px solid transparent; border-top-color: #111; border-bottom: 0; flex: none; }
  main { height: 894px; display: flex; border-top: 1px solid #a0a0a0; box-shadow: inset 0 1px #696969; box-sizing: border-box; }
  aside { width: 276px; flex: none; box-sizing: border-box; background: #f0f0f0; border-left: 2px solid #8a8a8a; padding: 3px 3px 0 4px; display: flex; flex-direction: column; border-right: 2px solid #f6f6f6; margin-top: 1px; }
  .sidebar { height: 39px; width: 217px; flex: none; display: flex; align-items: center; border-right: 1px solid #ccc; border-radius: 3px; background: linear-gradient(#fafafa, #f1f1f1); box-sizing: border-box; padding: 0 0 1px 6px; }
  .big { width: 16px; height: 16px; font-family: 'Open Sans', sans-serif; }
  .btn { display: flex; flex-direction: column; align-items: center; justify-content: space-between; height: 30px; line-height: 14px; }
  .btn svg { width: 12px; height: 10px; margin-top: 2px; }
  .back { width: 26px; margin-left: 9px; margin-right: 8px; }
  .fwd { width: 24px; margin-left: 7px; color: #8d8d8d; }
  .add { width: 24px; margin-left: 9px; }
  .add svg { width: 18px; height: 16px; margin-top: -2px; }
  .tall { height: 28px; margin: 0 6px 0 8px; }
  .outline { margin-right: 6px; }
  .q { margin-left: 7px; }
  .tree { flex: none; height: 827px; box-sizing: border-box; border: 1px solid #828790; background: #fff; padding-top: 1px; font-family: 'Liberation Sans', sans-serif; font-size: 11px; letter-spacing: -.06px; }
  .row { height: 18px; display: flex; align-items: center; }
  .cell { width: 24px; height: 18px; flex: none; }
  .pic { display: flex; align-items: center; justify-content: center; position: relative; }
  .dots { stroke: #777; stroke-dasharray: 1 1; fill: none; }
  .label { white-space: nowrap; padding: 0 2px; line-height: 17px; color: #000; }
  .tight { letter-spacing: -.3px; }
  .sel { background: #f0f0f0; }
  .tabs { display: flex; flex: 1; margin-left: -4px; align-items: flex-start; }
  .tab { height: 18px; line-height: 16px; padding: 0 3px 0 4px; border: 1px solid #ddd; border-left: 0; margin-top: 2px; font-size: 11px; letter-spacing: -.15px; }
  .active { background: #fff; height: 22px; line-height: 25px; padding: 0 7px 0 8px; margin-top: 0; border: 0; border-right: 1px solid #ddd; letter-spacing: -.55px; }
  .view { width: 1642px; height: 892px; margin-top: 1px; overflow: hidden; }
  .dimtext { fill: #00f0f0; font: 12.500px 'Liberation Sans', sans-serif; }
  .status { height: 24px; display: flex; align-items: center; background: #f0f0f0; border-bottom: 1px solid #fff; border-top: 1px solid #fff; box-sizing: border-box; gap: 2px; padding: 1px 0 0 1px; font-family: 'Liberation Sans', sans-serif; font-size: 12px; letter-spacing: -.2px; }
  .pane { height: 21px; box-sizing: border-box; display: flex; align-items: center; gap: 4px; border: 1px solid; border-color: #a0a0a0 #fff #fff #a0a0a0; flex: none; white-space: nowrap; padding-top: 1px; }
  .pane b { color: #000; }
  .p1 { width: 148px; gap: 3px; }
  .p2 { width: 188px; }
  .p3 { width: 1148px; padding-left: 2px; font-weight: bold; color: #858585; letter-spacing: -.1px; }
  .p4 { width: 53px; gap: 3px; }
  .p5 { width: 361px; justify-content: flex-end; letter-spacing: -.4px; }
  .corner { flex: 1; }
  footer { height: 40px; display: flex; align-items: center; background: linear-gradient(90deg, #213740, #20353f 50%, #1c2b40 80%, #1b2944); color: #fff; }
  .start { width: 48px; display: flex; justify-content: center; }
  .start svg { width: 16px; height: 16px; }
  .search { width: 288px; height: 40px; box-sizing: border-box; border: 1px solid #c4c4c4; background: #f2f2f2; display: flex; align-items: center; color: #333; font-size: 14.700px; padding: 0 4px 0 11px; }
  .search span { flex: 1; margin-left: 11px; letter-spacing: -.15px; }
  .glass { width: 17px; height: 17px; }
  .pie { width: 68px; height: 36px; }
  .app { width: 49px; height: 40px; display: flex; align-items: center; justify-content: center; }
  .tview { width: 47px; margin-right: 2px; }
  .tv { width: 16px; height: 16px; }
  .i24 { width: 24px; height: 24px; }
  .i22 { width: 22px; height: 22px; }
  .edge, .chrome { box-shadow: inset 0 -2px #76b9ed; width: 40px; margin: 0 4px 0 6px; }
  .mail { width: 50px; }
  .chrome { margin: 0 5px 0 4px; }
  .running { width: 48px; background: #4e616a; box-shadow: inset 0 -2px #76b9ed; }
  .grow { flex: 1; }
  .trayicons { width: 168px; height: 40px; }
  .clock { width: 62px; display: flex; flex-direction: column; align-items: center; line-height: 18px; font-size: 11.700px; letter-spacing: -.2px; padding-bottom: 2px; }
  .notif { width: 26px; height: 26px; margin: 2px 11px 0 12px; font-family: 'Open Sans', sans-serif; }
  .edgebar { width: 5px; height: 40px; box-sizing: border-box; border-left: 1px solid #66717f; }
</style>
